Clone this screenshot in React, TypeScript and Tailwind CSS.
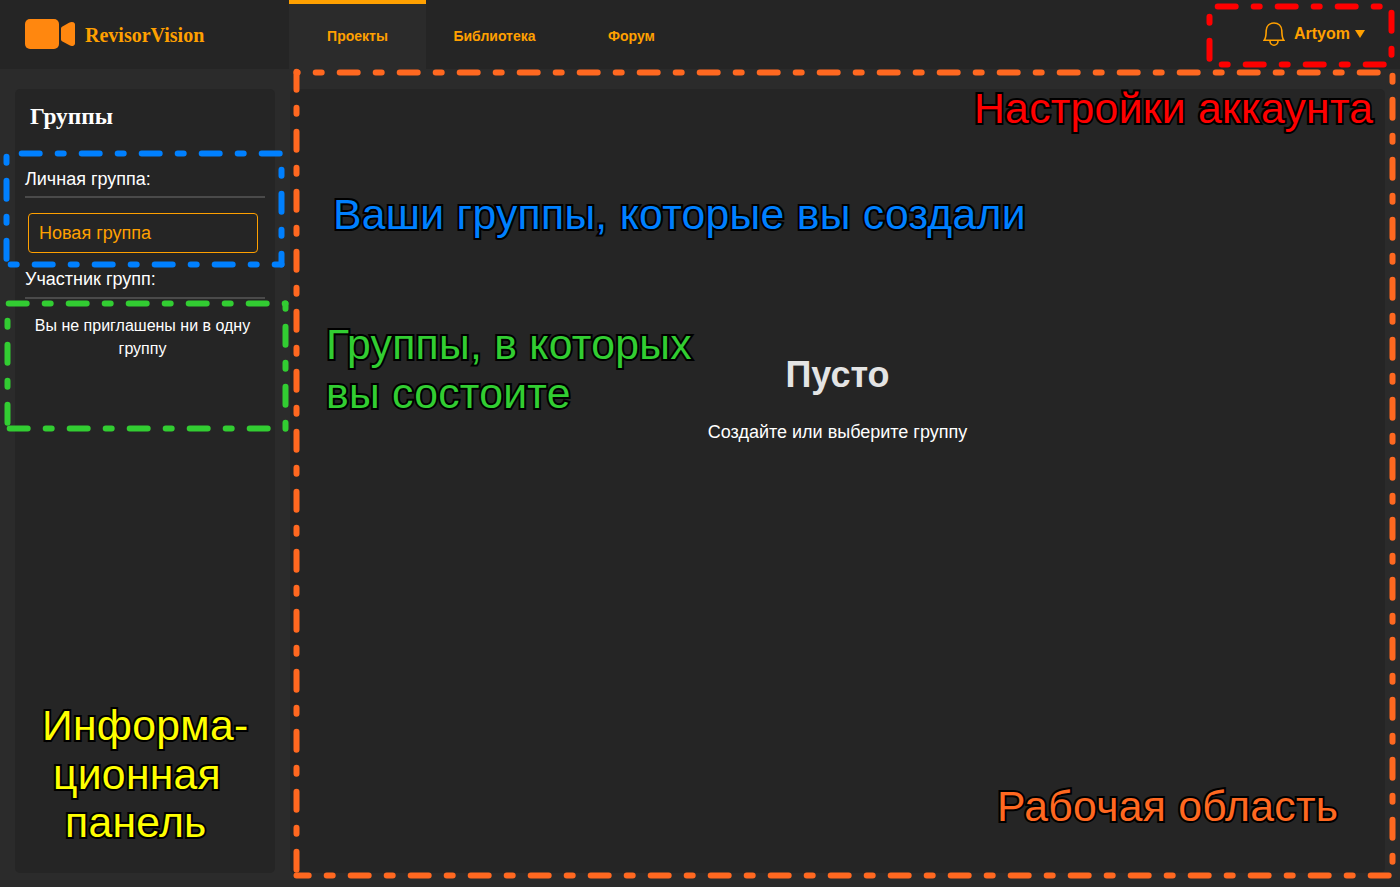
type Edge = { x1: number; y1: number; x2: number; y2: number; offset: number };

const frames: { color: string; edges: Edge[] }[] = [
  {
    color: "#ff6820",
    edges: [
      { x1: 296.5, y1: 71.7, x2: 296.5, y2: 870, offset: 0 },
      { x1: 296.5, y1: 875.5, x2: 1389, y2: 875.5, offset: 5.8 },
      { x1: 1392.5, y1: 75, x2: 1392.5, y2: 866, offset: 35.3 },
      { x1: 296.5, y1: 72.5, x2: 1380, y2: 72.5, offset: 16.8 },
    ],
  },
  {
    color: "#ff0000",
    edges: [
      { x1: 1217.7, y1: 6.5, x2: 1382, y2: 6.5, offset: 0 },
      { x1: 1209.5, y1: 14, x2: 1209.5, y2: 60, offset: 33.3 },
      { x1: 1216, y1: 64.5, x2: 1388, y2: 64.5, offset: 30.3 },
      { x1: 1391.5, y1: 12.7, x2: 1391.5, y2: 56, offset: 0 },
    ],
  },
  {
    color: "#0080ff",
    edges: [
      { x1: 21.7, y1: 153.5, x2: 280, y2: 153.5, offset: 0 },
      { x1: 6.5, y1: 155, x2: 6.5, y2: 260, offset: 34.3 },
      { x1: 9, y1: 264.5, x2: 281.5, y2: 264.5, offset: 34.3 },
      { x1: 281.5, y1: 168, x2: 281.5, y2: 264.5, offset: 34.3 },
    ],
  },
  {
    color: "#32cd32",
    edges: [
      { x1: 8.7, y1: 303.5, x2: 285.5, y2: 303.5, offset: 0 },
      { x1: 7.5, y1: 319, x2: 7.5, y2: 424, offset: 34.3 },
      { x1: 9.7, y1: 428.5, x2: 270, y2: 428.5, offset: 0 },
      { x1: 285.5, y1: 303.5, x2: 285.5, y2: 429, offset: 36.8 },
    ],
  },
];

const labels = [
  { text: "Настройки аккаунта", place: "left-[974px] top-[84px] text-[#ff0000]" },
  { text: "Ваши группы, которые вы создали", place: "left-[333px] top-[190px] text-[#0080ff]" },
  { text: "Группы, в которых\nвы состоите", place: "left-[326px] top-[320px] text-[#32cd32]" },
  { text: "Информа-", place: "left-[42px] top-[701px] text-[#ffff00]" },
  { text: "ционная", place: "left-[53px] top-[750px] text-[#ffff00]" },
  { text: "панель", place: "left-[65px] top-[798px] text-[#ffff00]" },
  { text: "Рабочая область", place: "left-[997px] top-[782px] text-[#ff6820]" },
];

function Logo() {
  return (
    <div className="flex w-[289px] items-center pl-[25px]">
      <svg width="50" height="30" viewBox="0 0 50 30" fill="#ff870f" className="mb-px shrink-0">
        <rect x="0" y="0" width="34" height="30" rx="5" />
        <path d="M36 9.5 Q36 8.3 37 7.7 L44 3.7 Q46.5 2.3 48.5 3.3 Q50 4 50 5.5 V24.5 Q50 26 48.5 26.7 Q46.5 27.5 44.5 26.3 L37 22.2 Q36 21.5 36 20.5 Z" />
      </svg>
      <span className="ml-[10px] font-['Liberation_Serif',serif] text-[20px] font-bold text-[#ffa000]">RevisorVision</span>
    </div>
  );
}

function Header() {
  return (
    <header className="flex h-[69px] shrink-0 bg-[#252525] text-[#ffa000]">
      <Logo />
      <nav className="flex text-[14px] font-bold">
        <a className="flex w-[137px] items-center justify-center border-t-4 border-[#ffa000] bg-[#2b2b2b]">Проекты</a>
        <a className="flex w-[137px] items-center justify-center pt-1">Библиотека</a>
        <a className="flex w-[137px] items-center justify-center pt-1">Форум</a>
      </nav>
      <div className="ml-auto flex items-center pb-[2px] pr-[35px]">
        <svg width="22" height="24" viewBox="0 0 22 24" fill="none" stroke="#ffa000" strokeWidth="1.6">
          <path d="M1.2 18.3 C3.3 15.5 3 12 3.2 8.5 C3.5 4 6.5 1 11 1 S18.500 4 18.800 8.500 C19 12 18.700 15.500 20.800 18.300 Z" />
          <path d="M7 19 A4 4.200 0 0 0 15 19" />
        </svg>
        <span className="ml-[9px] text-[16px] font-bold">Artyom</span>
        <svg className="ml-[5px]" width="10" height="8" viewBox="0 0 10 8" fill="#ffa000">
          <path d="M0 0H10L5 8Z" />
        </svg>
      </div>
    </header>
  );
}

function Sidebar() {
  return (
    <aside className="flex w-[260px] shrink-0 flex-col rounded-[5px] bg-[#252525] px-[10px] text-white">
      <h2 className="ml-[5px] mt-[14px] font-['Liberation_Serif',serif] text-[23.4px] font-bold leading-[27px]">Группы</h2>
      <h3 className="mt-[38px] h-[30px] border-b-2 border-[#4a4a4a] text-[18px] leading-[22px]">Личная группа:</h3>
      <button className="ml-[3px] mt-[15px] h-[40px] w-[230px] rounded-[4px] border border-[#ffa000] pl-[10px] text-left text-[18px] text-[#ffa000]">
        Новая группа
      </button>
      <h3 className="mt-[15px] h-[31px] border-b-2 border-[#4a4a4a] text-[18px] leading-[22px]">Участник групп:</h3>
      <p className="mt-[15px] pr-[5px] text-center text-[16px] leading-[23px]">Вы не приглашены ни в одну группу</p>
    </aside>
  );
}

export default function App() {
  return (
    <div className="relative flex h-[887px] w-[1400px] flex-col overflow-hidden bg-[#2b2b2b] font-['Liberation_Sans',Arial,sans-serif]">
      <Header />
      <div className="flex grow gap-[15px] px-[15px] pb-[14px] pt-[20px]">
        <Sidebar />
        <main className="flex grow flex-col items-center rounded-[5px] bg-[#252525]">
          <h1 className="mt-[265px] text-[36px] font-bold leading-[42px] text-[#e4e4e4]">Пусто</h1>
          <p className="mt-[25px] text-[18px] leading-[22px] text-white">Создайте или выберите группу</p>
        </main>
      </div>
      <svg className="pointer-events-none absolute inset-0" width="1400" height="887" fill="none">
        {frames.map((frame) => (
          <g key={frame.color} stroke={frame.color} strokeWidth="6" strokeLinecap="round" strokeDasharray="18 18 6 18">
            {frame.edges.map(({ offset, ...line }, i) => (
              <line key={i} {...line} strokeDashoffset={offset} />
            ))}
          </g>
        ))}
      </svg>
      {labels.map(({ text, place }) => (
        <div
          key={text}
          className={`absolute whitespace-pre text-[42.67px] leading-[49px] tracking-[0.3px] [-webkit-text-stroke:4px_#000] [paint-order:stroke_fill] [stroke-linejoin:round] ${place}`}
        >
          {text}
        </div>
      ))}
    </div>
  );
}
